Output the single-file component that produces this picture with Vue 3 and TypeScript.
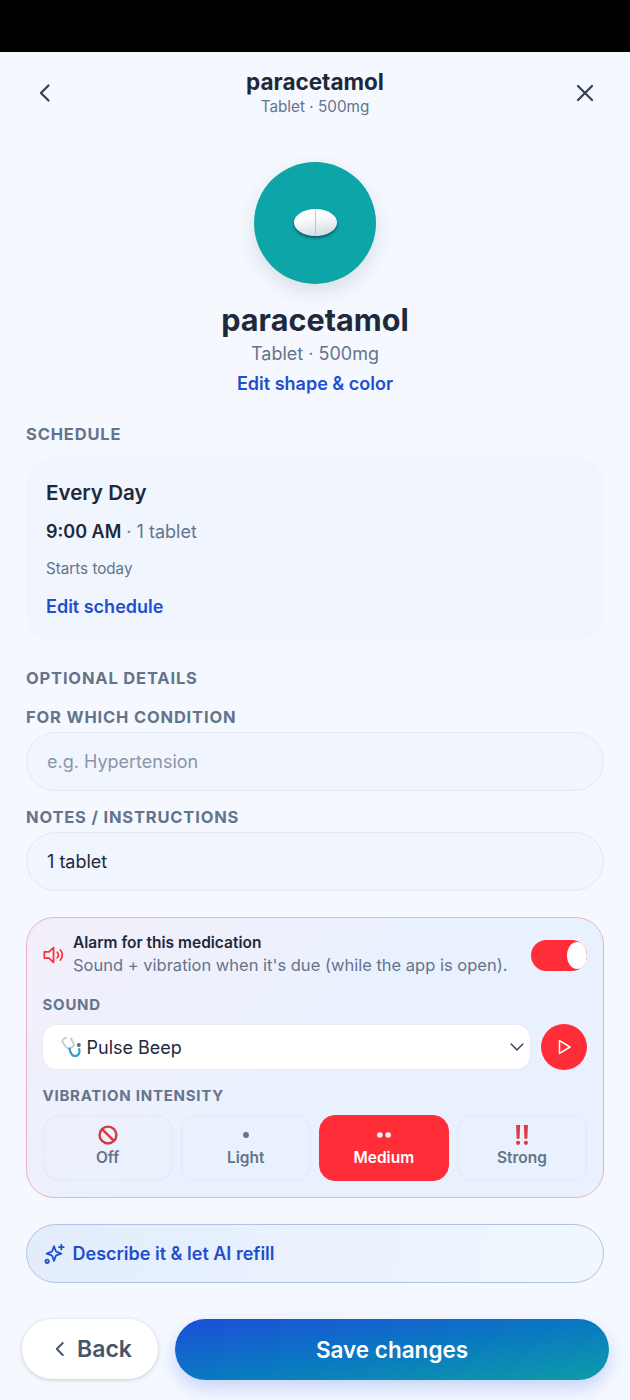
<script setup lang="ts">
const levels = [
  { name: 'Off', icon: 'off' },
  { name: 'Light', icon: 'light' },
  { name: 'Medium', icon: 'medium' },
  { name: 'Strong', icon: 'strong' },
]
</script>

<template>
  <div class="page">
    <div class="statusbar"></div>

    <header class="topbar">
      <button class="icon-btn">
        <svg width="28" height="28" viewBox="0 0 24 24" fill="none" stroke="#334155" stroke-width="1.9" stroke-linecap="round" stroke-linejoin="round"><path d="M15 5.5 8.5 12l6.5 6.5" /></svg>
      </button>
      <div class="topbar-title">
        <div class="title">paracetamol</div>
        <div class="subtitle">Tablet · 500mg</div>
      </div>
      <button class="icon-btn">
        <svg width="28" height="28" viewBox="0 0 24 24" fill="none" stroke="#334155" stroke-width="1.9" stroke-linecap="round"><path d="M18 6 6 18M6 6l12 12" /></svg>
      </button>
    </header>

    <section class="hero">
      <div class="disc">
        <div class="pill"><span class="score"></span></div>
      </div>
      <h1>paracetamol</h1>
      <div class="hero-sub">Tablet · 500mg</div>
      <a class="link hero-link">Edit shape &amp; color</a>
    </section>

    <main class="content">
      <div class="label">Schedule</div>
      <div class="schedule">
        <div class="freq">Every Day</div>
        <div class="dose"><b>9:00 AM</b> · 1 tablet</div>
        <div class="starts">Starts today</div>
        <a class="link">Edit schedule</a>
      </div>

      <div class="label optional">Optional details</div>
      <div class="label field-label">For which condition</div>
      <input class="field" placeholder="e.g. Hypertension" />
      <div class="label field-label second">Notes / instructions</div>
      <input class="field" value="1 tablet" />

      <div class="alarm">
        <div class="alarm-head">
          <svg class="speaker" width="22" height="22" viewBox="0 0 24 24" fill="none" stroke="#ff2d37" stroke-width="1.9" stroke-linecap="round" stroke-linejoin="round"><path d="M11.5 4 6.5 8.5H1.5v7h5l5 4.5z" /><path d="M15.5 9a4.5 4.5 0 0 1 0 6" /><path d="M19 6.5a8.5 8.5 0 0 1 0 11" /></svg>
          <div class="alarm-text">
            <div class="alarm-title">Alarm for this medication</div>
            <div class="alarm-desc">Sound + vibration when it's due (while the app is open).</div>
          </div>
          <div class="toggle"><span class="knob"></span></div>
        </div>

        <div class="label small">Sound</div>
        <div class="sound-row">
          <div class="select">
            <svg width="24" height="24" viewBox="0 0 24 24" fill="none" stroke-linecap="round" stroke-linejoin="round">
              <path d="M6 2.5 3 4.5c-1 .8-.8 2 0 3.2l3 4.3c1.2 1.6 3 1.8 4.5 1l2.5-1.6c1-.8 1.2-2 .5-3.2L11 3.5" stroke="#c4cfdc" stroke-width="2" />
              <path d="M9.5 13.5c.5 3 1.5 7.5 5.5 7.5 4 0 5-3.5 4.2-7" stroke="#2f9fd8" stroke-width="2.2" />
              <circle cx="18.8" cy="10" r="2" fill="#5b6b7b" />
            </svg>
            <span>Pulse Beep</span>
            <svg class="chev" width="20" height="20" viewBox="0 0 24 24" fill="none" stroke="#334155" stroke-width="1.7" stroke-linecap="round" stroke-linejoin="round"><path d="m5 8.5 7 7 7-7" /></svg>
          </div>
          <button class="play">
            <svg width="18" height="18" viewBox="0 0 24 24" fill="none" stroke="#fff" stroke-width="2" stroke-linejoin="round"><path d="M6 3.5 20 12 6 20.5z" /></svg>
          </button>
        </div>

        <div class="label small vib">Vibration intensity</div>
        <div class="levels">
          <div v-for="l in levels" :key="l.name" class="level" :class="{ active: l.name === 'Medium' }">
            <div class="level-icon">
              <svg v-if="l.icon === 'off'" width="22" height="22" viewBox="0 0 24 24" fill="none" stroke="#d8383f" stroke-width="2.6"><circle cx="12" cy="12" r="9.2" /><path d="M5.5 5.5l13 13" /></svg>
              <svg v-else-if="l.icon === 'light'" width="22" height="22" viewBox="0 0 24 24" fill="#64748b"><circle cx="12" cy="12" r="3.2" /></svg>
              <svg v-else-if="l.icon === 'medium'" width="22" height="22" viewBox="0 0 24 24" fill="#fff"><circle cx="7.5" cy="12" r="3" /><circle cx="16.5" cy="12" r="3" /></svg>
              <svg v-else width="22" height="22" viewBox="0 0 24 24" fill="#dc3c42"><path d="M5.5 1h4.5l-.7 15H6.2zM14 1h4.5l-.7 15h-3.1z" /><circle cx="7.75" cy="20.5" r="2.3" /><circle cx="16.25" cy="20.5" r="2.3" /></svg>
            </div>
            <div class="level-name">{{ l.name }}</div>
          </div>
        </div>
      </div>

      <button class="ai">
        <svg width="22" height="22" viewBox="0 0 24 24" fill="none" stroke="#1f4fcc" stroke-width="2" stroke-linecap="round" stroke-linejoin="round"><path d="M12 5.5 13.8 10.5a2 2 0 0 0 1.2 1.2L20 13.5l-5 1.8a2 2 0 0 0-1.2 1.2L12 21.5l-1.8-5a2 2 0 0 0-1.2-1.2L4 13.5l5-1.8a2 2 0 0 0 1.2-1.2z" transform="translate(0 -2)" /><path d="M20 2v5M17.5 4.5h5" /><circle cx="4.5" cy="20" r="1.8" /></svg>
        <span>Describe it &amp; let AI refill</span>
      </button>
    </main>

    <footer class="actions">
      <button class="back">
        <svg width="22" height="22" viewBox="0 0 24 24" fill="none" stroke="#475569" stroke-width="2.2" stroke-linecap="round" stroke-linejoin="round"><path d="M15 5.5 8.5 12l6.5 6.5" /></svg>
        <span>Back</span>
      </button>
      <button class="save">Save changes</button>
    </footer>
  </div>
</template>

<style scoped>
.page {
  width: 630px;
  height: 1400px;
  background: #f5f9ff;
  font-family: Inter, "Liberation Sans", sans-serif;
  color: #0f172a;
  display: flex;
  flex-direction: column;
  overflow: hidden;
}
.statusbar {
  height: 52px;
  background: #000;
  flex: none;
}
button {
  font-family: inherit;
  border: none;
  background: none;
  padding: 0;
}
.topbar {
  display: flex;
  align-items: center;
  justify-content: space-between;
  padding: 15px 31px 0;
  height: 64px;
  box-sizing: border-box;
}
.icon-btn {
  width: 28px;
  height: 28px;
  margin-top: 2px;
}
.topbar-title {
  text-align: center;
}
.title {
  font-size: 22.5px;
  line-height: 28px;
  font-weight: 700;
  color: #1e293b;
}
.subtitle {
  margin-top: 2px;
  font-size: 15.3px;
  line-height: 18px;
  color: #64748b;
}
.hero {
  display: flex;
  flex-direction: column;
  align-items: center;
  padding-top: 46px;
}
.disc {
  width: 122px;
  height: 122px;
  border-radius: 50%;
  background: #0ea5a8;
  box-shadow: 0 8px 20px rgba(15, 23, 42, 0.12);
  display: flex;
  align-items: center;
  justify-content: center;
}
.pill {
  position: relative;
  width: 43px;
  height: 27px;
  margin-top: -1px;
  border-radius: 50%;
  background: linear-gradient(170deg, #ffffff 30%, #ced6df 100%);
  box-shadow: 0 2px 3px rgba(3, 50, 60, 0.65);
}
.score {
  position: absolute;
  left: 21px;
  top: 1px;
  bottom: 1px;
  width: 1.5px;
  background: #bcc4cc;
}
h1 {
  margin: 17px 0 0;
  font-size: 30.6px;
  line-height: 38px;
  font-weight: 700;
  color: #1e293b;
}
.hero-sub {
  margin-top: 3px;
  font-size: 18px;
  line-height: 24px;
  color: #64748b;
}
.link {
  font-size: 18px;
  line-height: 24px;
  font-weight: 600;
  color: #1f4fcc;
}
.hero-link {
  margin-top: 6px;
}
.content {
  padding: 28px 26px 0;
}
.label {
  font-size: 16.5px;
  line-height: 20px;
  font-weight: 700;
  letter-spacing: 0.05em;
  text-transform: uppercase;
  color: #64748b;
}
.schedule {
  margin-top: 13px;
  height: 184px;
  box-sizing: border-box;
  padding: 22px 20px;
  border-radius: 28px;
  background: #f0f5fe;
  display: flex;
  flex-direction: column;
  align-items: flex-start;
}
.freq {
  font-size: 20.6px;
  line-height: 28px;
  font-weight: 600;
  color: #1e293b;
}
.dose {
  margin-top: 13px;
  font-size: 18px;
  line-height: 24px;
  color: #64748b;
}
.dose b {
  font-weight: 600;
  color: #1e293b;
}
.starts {
  margin-top: 15px;
  font-size: 15.2px;
  line-height: 20px;
  color: #64748b;
}
.schedule .link {
  margin-top: 16px;
}
.optional {
  margin-top: 27px;
}
.field-label {
  margin-top: 19px;
}
.field-label.second {
  margin-top: 16px;
}
.field {
  display: block;
  margin-top: 5px;
  width: 100%;
  height: 59px;
  box-sizing: border-box;
  padding: 0 20px;
  border-radius: 30px;
  border: 1.5px solid #e2e8f2;
  background: #f0f5fe;
  font-family: inherit;
  font-size: 18px;
  color: #1e293b;
  outline: none;
}
.field::placeholder {
  color: #8a96a8;
  opacity: 1;
}
.alarm {
  margin-top: 26px;
  height: 281px;
  box-sizing: border-box;
  padding: 16px 16px 0 15.5px;
  border: 1.5px solid #ebb3bf;
  border-radius: 28px;
  background: linear-gradient(135deg, #f3effa 0%, #eaf1fe 45%, #eaf1fe 100%);
}
.alarm-head {
  display: flex;
  align-items: center;
  gap: 8.5px;
}
.speaker {
  flex: none;
}
.alarm-text {
  flex: 1;
  min-width: 0;
}
.alarm-title {
  font-size: 15.5px;
  line-height: 18px;
  font-weight: 600;
  color: #1e293b;
}
.alarm-desc {
  margin-top: 3px;
  font-size: 16.5px;
  line-height: 20px;
  color: #64748b;
  white-space: nowrap;
}
.toggle {
  flex: none;
  width: 56px;
  height: 31px;
  border-radius: 16px;
  background: #ff2d37;
  position: relative;
  margin-top: 2px;
}
.knob {
  position: absolute;
  right: 0;
  top: 2px;
  width: 20px;
  height: 27px;
  border-radius: 50%;
  background: #fff;
}
.small {
  font-size: 15px;
  line-height: 18px;
}
.alarm > .small {
  margin-top: 21px;
}
.sound-row {
  display: flex;
  align-items: center;
  gap: 11px;
  margin-top: 10px;
}
.select {
  flex: 1;
  height: 44px;
  box-sizing: border-box;
  padding: 0 3px 0 17px;
  background: #fff;
  border-radius: 14px;
  box-shadow: 0 0 0 1px #e6ecf5;
  display: flex;
  align-items: center;
  gap: 3px;
  font-size: 18px;
  color: #1e293b;
}
.chev {
  margin-left: auto;
}
.play {
  flex: none;
  width: 46px;
  height: 46px;
  border-radius: 50%;
  background: #ff2d37;
  display: flex;
  align-items: center;
  justify-content: center;
}
.alarm > .small.vib {
  margin-top: 17px;
}
.levels {
  display: grid;
  grid-template-columns: repeat(4, 1fr);
  gap: 8px;
  margin-top: 10px;
}
.level {
  height: 66px;
  box-sizing: border-box;
  border: 1.5px solid #e2e8f4;
  border-radius: 16px;
  display: flex;
  flex-direction: column;
  align-items: center;
  padding-top: 8px;
  color: #64748b;
}
.level.active {
  background: #ff2d37;
  border-color: #ff2d37;
  color: #fff;
}
.level-icon {
  height: 22px;
}
.level-name {
  margin-top: 2px;
  font-size: 15.5px;
  line-height: 20px;
  font-weight: 600;
}
.ai {
  margin-top: 26px;
  width: 100%;
  height: 59px;
  box-sizing: border-box;
  padding: 0 15.5px;
  display: flex;
  align-items: center;
  gap: 8px;
  border: 1.5px solid #b0c2e4;
  border-radius: 30px;
  background: linear-gradient(100deg, #e3ecfb 0%, #eaf3fd 60%, #f0f7fd 100%);
  font-size: 18px;
  font-weight: 600;
  color: #1f4fcc;
}
.actions {
  display: flex;
  gap: 17px;
  padding: 0 21px 0 22px;
  margin-top: 36px;
}
.back {
  width: 136px;
  height: 60px;
  padding-left: 1px;
  border-radius: 30px;
  background: #fff;
  box-shadow: 0 1px 4px rgba(15, 23, 42, 0.2);
  display: flex;
  align-items: center;
  justify-content: center;
  gap: 6px;
  font-size: 23px;
  font-weight: 600;
  color: #475569;
}
.save {
  flex: 1;
  height: 61px;
  border-radius: 31px;
  background: linear-gradient(to bottom right, #1d4ed8 0%, #0a78c2 50%, #0d9ca8 100%);
  box-shadow: 0 8px 18px rgba(29, 78, 216, 0.22);
  font-size: 22.5px;
  font-weight: 600;
  color: #fff;
}
</style>
